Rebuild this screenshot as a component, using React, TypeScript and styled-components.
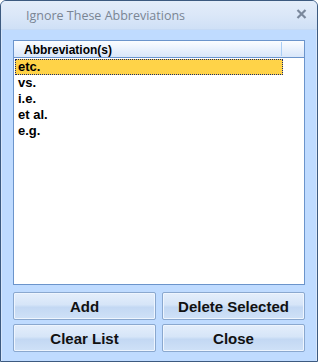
import styled, { createGlobalStyle } from 'styled-components';

const GlobalStyle = createGlobalStyle`
	html, body {
		margin: 0;
		padding: 0;
		background: #ffffff;
	}
	* {
		box-sizing: border-box;
	}
`;

const items = ['etc.', 'vs.', 'i.e.', 'et al.', 'e.g.'];

const App = () => {
	return (
		<>
			<GlobalStyle />
			<Window>
				<TitleBar>
					<Title>Ignore These Abbreviations</Title>
					<CloseGlyph>
						<svg width='11' height='10' viewBox='0 0 11 10'>
							<path d='M1.5 1 L9.5 9 M9.5 1 L1.5 9' stroke='#7a889c' strokeWidth='2.2' />
						</svg>
					</CloseGlyph>
				</TitleBar>
				<Body>
					<ListBox>
						<Header>
							<HeaderCell>Abbreviation(s)</HeaderCell>
							<HeaderRest />
						</Header>
						<Rows>
							{items.map((item, index) => (
								<Row key={item} selected={index === 0}>
									{item}
								</Row>
							))}
						</Rows>
					</ListBox>
					<Buttons>
						<Button>Add</Button>
						<Button>Delete Selected</Button>
						<Button>Clear List</Button>
						<Button>Close</Button>
					</Buttons>
				</Body>
			</Window>
		</>
	);
};

export default App;

const Window = styled.div`
	width: 318px;
	height: 362px;
	display: flex;
	flex-direction: column;
	border: 1px solid #3c5a80;
	border-radius: 6px 6px 0 0;
	background: #bfdbff;
	overflow: hidden;
	font-family: 'Liberation Sans', Arial, sans-serif;
`;

const TitleBar = styled.div`
	height: 29px;
	flex: none;
	display: flex;
	align-items: center;
	justify-content: space-between;
	padding: 0 10px 0 25px;
	background: linear-gradient(#e3edfa 0%, #dbe7f8 50%, #cfe0f6 100%);
	border-bottom: 1px solid #c6daf4;
`;

const Title = styled.span`
	font-family: 'Open Sans', 'Liberation Sans', sans-serif;
	font-size: 12.5px;
	color: #7a8594;
	padding-top: 1px;
`;

const CloseGlyph = styled.span`
	display: flex;
	align-items: center;
	margin-top: -2px;
`;

const Body = styled.div`
	flex: 1;
	display: flex;
	flex-direction: column;
	padding: 10px 11px 8px 11px;
	border-left: 1px solid #d7e6fb;
	border-right: 1px solid #d7e6fb;
`;

const ListBox = styled.div`
	height: 245px;
	display: flex;
	flex-direction: column;
	background: #ffffff;
	border: 1px solid #6b94cb;
`;

const Header = styled.div`
	height: 17px;
	display: flex;
	background: linear-gradient(#fbfdff 0%, #e6effc 60%, #d9e7fa 100%);
	border-bottom: 1px solid #6b94cb;
`;

const HeaderCell = styled.div`
	width: 268px;
	padding-left: 10px;
	font-size: 12px;
	font-weight: bold;
	line-height: 16px;
	color: #000000;
	border-right: 1px solid #a9cdf5;
	margin: 1px 0 1px 0;
`;

const HeaderRest = styled.div`
	flex: 1;
`;

const Rows = styled.div`
	display: flex;
	flex-direction: column;
	padding-top: 1px;
`;

const Row = styled.div<{ selected?: boolean }>`
	width: 268px;
	height: 16px;
	margin-left: 1px;
	padding-left: 2px;
	font-size: 13px;
	font-weight: bold;
	line-height: 14px;
	color: #000000;
	background: ${({ selected }) => (selected ? '#ffd348' : 'transparent')};
	border: 1px ${({ selected }) => (selected ? 'dotted #1a2a70' : 'solid transparent')};
`;

const Buttons = styled.div`
	display: grid;
	grid-template-columns: 143px 143px;
	justify-content: space-between;
	row-gap: 4px;
	margin-top: 7px;
`;

const Button = styled.button`
	height: 28px;
	padding: 0;
	font-family: 'Liberation Sans', Arial, sans-serif;
	font-size: 15px;
	font-weight: bold;
	color: #111111;
	border: 1px solid #8aa8cf;
	border-radius: 2px;
	background: linear-gradient(#e4eefb 0%, #d6e5f8 45%, #c3d8f3 55%, #cfe1f7 100%);
	box-shadow: inset 0 0 0 1px #eef5fe;
`;
